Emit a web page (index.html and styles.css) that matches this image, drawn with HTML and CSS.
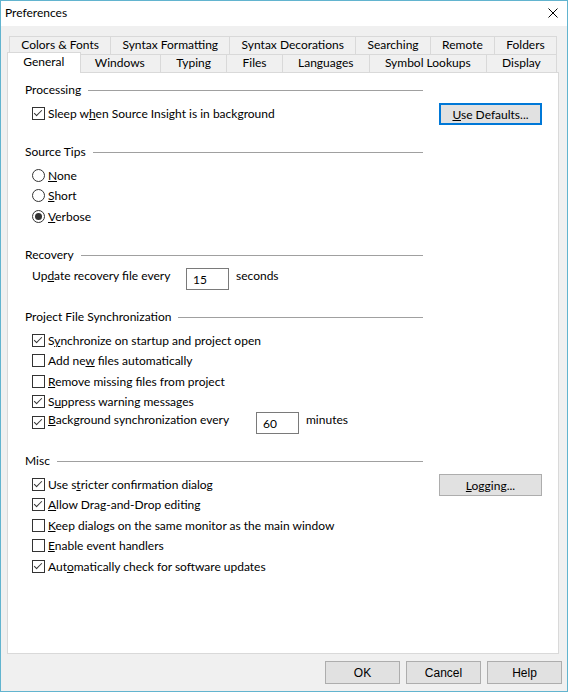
FILE: index.html
```html
<!DOCTYPE html>
<html>
<head>
    <meta charset="utf-8">
    <title>Preferences</title>
    <link rel="stylesheet" href="styles.css">
</head>
<body>
    <div class="window">
        <div class="titlebar">
            <span class="title">Preferences</span>
            <span class="close">
                <svg width="10" height="10" viewBox="0 0 10 10">
                    <path d="M0.5 0.5 L9.5 9.5 M9.5 0.5 L0.5 9.5" stroke="#000" stroke-width="1" fill="none"/>
                </svg>
            </span>
        </div>
        <div class="client">
            <div class="tabs">
                <div class="tab-row back-row">
                    <div class="tab">Colors &amp; Fonts</div>
                    <div class="tab">Syntax Formatting</div>
                    <div class="tab">Syntax Decorations</div>
                    <div class="tab">Searching</div>
                    <div class="tab">Remote</div>
                    <div class="tab">Folders</div>
                </div>
                <div class="tab-row front-row">
                    <div class="tab selected">General</div>
                    <div class="tab">Windows</div>
                    <div class="tab">Typing</div>
                    <div class="tab">Files</div>
                    <div class="tab">Languages</div>
                    <div class="tab">Symbol Lookups</div>
                    <div class="tab">Display</div>
                </div>
            </div>

            <div class="panel">
                <div class="group">
                    <div class="group-main">
                        <div class="group-title">Processing</div>
                        <div class="group-body">
                            <div class="row"><span class="check on"></span><span>Sleep w<u>h</u>en Source Insight is in background</span></div>
                        </div>
                    </div>
                    <div class="group-side">
                        <button class="btn default"><u>U</u>se Defaults...</button>
                    </div>
                </div>

                <div class="group">
                    <div class="group-main">
                        <div class="group-title">Source Tips</div>
                        <div class="group-body">
                            <div class="row"><span class="radio"></span><span><u>N</u>one</span></div>
                            <div class="row"><span class="radio"></span><span><u>S</u>hort</span></div>
                            <div class="row"><span class="radio on"></span><span><u>V</u>erbose</span></div>
                        </div>
                    </div>
                </div>

                <div class="group">
                    <div class="group-main">
                        <div class="group-title">Recovery</div>
                        <div class="group-body">
                            <div class="row field-row">
                                <span class="field-label recovery-label">Up<u>d</u>ate recovery file every</span>
                                <span class="edit">15</span>
                                <span class="unit">seconds</span>
                            </div>
                        </div>
                    </div>
                </div>

                <div class="group">
                    <div class="group-main">
                        <div class="group-title">Project File Synchronization</div>
                        <div class="group-body">
                            <div class="row"><span class="check on"></span><span>S<u>y</u>nchronize on startup and project open</span></div>
                            <div class="row"><span class="check"></span><span>Add ne<u>w</u> files automatically</span></div>
                            <div class="row"><span class="check"></span><span><u>R</u>emove missing files from project</span></div>
                            <div class="row"><span class="check on"></span><span>S<u>u</u>ppress warning messages</span></div>
                            <div class="row field-row">
                                <span class="check on"></span>
                                <span class="field-label sync-label"><u>B</u>ackground synchronization every</span>
                                <span class="edit">60</span>
                                <span class="unit">minutes</span>
                            </div>
                        </div>
                    </div>
                </div>

                <div class="group">
                    <div class="group-main">
                        <div class="group-title">Misc</div>
                        <div class="group-body">
                            <div class="row"><span class="check on"></span><span>Use s<u>t</u>ricter confirmation dialog</span></div>
                            <div class="row"><span class="check on"></span><span><u>A</u>llow Drag-and-Drop editing</span></div>
                            <div class="row"><span class="check"></span><span><u>K</u>eep dialogs on the same monitor as the main window</span></div>
                            <div class="row"><span class="check"></span><span><u>E</u>nable event handlers</span></div>
                            <div class="row"><span class="check on"></span><span>Aut<u>o</u>matically check for software updates</span></div>
                        </div>
                    </div>
                    <div class="group-side">
                        <button class="btn"><u>L</u>ogging...</button>
                    </div>
                </div>
            </div>

            <div class="footer">
                <button class="btn dialog-btn">OK</button>
                <button class="btn dialog-btn">Cancel</button>
                <button class="btn dialog-btn">Help</button>
            </div>
        </div>
    </div>
</body>
</html>
```

FILE: styles.css
```css
body{
    margin: 0;
    font-family: Lato, "Noto Sans", sans-serif;
    font-size: 12px;
    color: #000;
}

.window{
    width: 568px;
    height: 692px;
    box-sizing: border-box;
    border: 1px solid #62b4cf;
    background-color: #f0f0f0;
}

/* title bar */

.titlebar{
    height: 25px;
    background-color: #fff;
    display: flex;
    align-items: center;
    justify-content: space-between;
    padding: 0 9px 2px 4px;
    box-sizing: border-box;
}

.close{
    display: flex;
    margin-top: 1px;
}

/* tab strip, two rows */

.client{
    padding-top: 10px;
}

.tabs{
    height: 36px;
}

.tab-row{
    display: flex;
    height: 18px;
    margin-left: 8px;
    width: 548px;
}

.tab{
    flex: 1 1 auto;
    height: 18px;
    box-sizing: border-box;
    border: 1px solid #d9d9d9;
    border-bottom: none;
    line-height: 16px;
    text-align: center;
    white-space: nowrap;
    background-color: #f0f0f0;
}

.tab + .tab{
    margin-left: -1px;
}

.tab.selected{
    position: relative;
    z-index: 1;
    height: 21px;
    margin: -2px -2px 0 -2px;
    background-color: #fff;
    line-height: 17px;
}

.tab.selected + .tab{
    margin-left: 0;
}

/* page body */

.panel{
    margin-left: 6px;
    width: 552px;
    height: 582px;
    box-sizing: border-box;
    border: 1px solid #d9d9d9;
    background-color: #fff;
    padding: 9px 0 0 17px;
}

.group{
    display: flex;
    align-items: flex-start;
}

.group + .group{
    margin-top: 20.5px;
}

.group-main{
    width: 398px;
}

/* side buttons line up with the first row and hang below it */
.group-side{
    margin-left: 16px;
    margin-top: 21px;
    height: 20px;
}

.group-title{
    display: flex;
    align-items: center;
    height: 16px;
    line-height: 16px;
}

.group-title::after{
    content: "";
    flex: 1;
    height: 1px;
    margin-left: 7px;
    background-color: #a0a0a0;
}

.group-body{
    margin-top: 5px;
    padding-left: 7px;
}

.row{
    display: flex;
    align-items: center;
    height: 20.5px;
    white-space: nowrap;
}

/* check boxes and radio buttons */

.check,
.radio{
    position: relative;
    flex: none;
    width: 13px;
    height: 13px;
    box-sizing: border-box;
    border: 1px solid #333;
    background-color: #fff;
    margin-right: 3px;
}

.radio{
    border-radius: 50%;
}

.check.on::after{
    content: "";
    position: absolute;
    left: 3px;
    top: 0px;
    width: 3px;
    height: 7px;
    border-right: 1px solid #333;
    border-bottom: 1px solid #333;
    transform: rotate(45deg);
}

.radio.on::after{
    content: "";
    position: absolute;
    left: 2px;
    top: 2px;
    width: 7px;
    height: 7px;
    border-radius: 50%;
    background-color: #333;
}

/* number fields */

.field-row{
    align-items: flex-start;
}

.field-row .check{
    align-self: center;
}

.field-label{
    line-height: 16px;
}

.recovery-label{
    width: 154px;
}

.sync-label{
    width: 208px;
}

.edit{
    width: 43px;
    height: 22px;
    box-sizing: border-box;
    border: 1px solid #7a7a7a;
    background-color: #fff;
    padding-left: 6px;
    line-height: 22px;
}

.field-row .edit{
    margin-bottom: -1.5px;
}

.unit{
    margin-left: 7px;
    line-height: 16px;
}

/* buttons */

.btn{
    font-family: inherit;
    font-size: 12px;
    color: #000;
    width: 103px;
    height: 22px;
    padding: 0;
    border: 1px solid #adadad;
    background-color: #e1e1e1;
}

.btn.default{
    border: 2px solid #0078d7;
}

.footer{
    display: flex;
    justify-content: flex-end;
    gap: 6px;
    padding: 7px 5px 0 0;
}

.dialog-btn{
    font-family: "Liberation Sans", Arial, sans-serif;
    width: 75px;
    height: 23px;
}
```
